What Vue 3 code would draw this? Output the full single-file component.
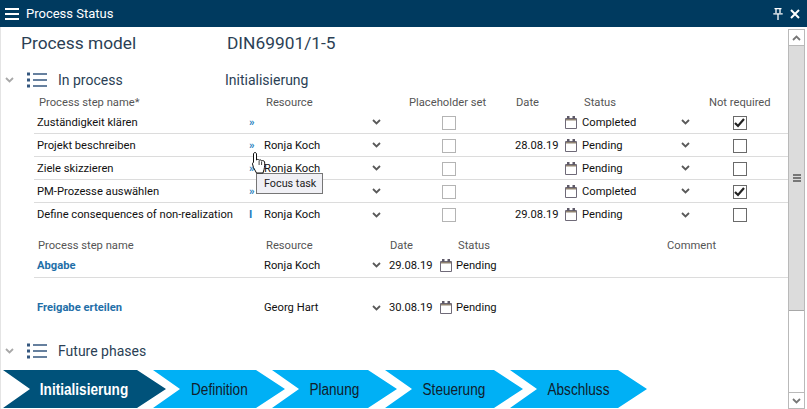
<script setup>
const steps = [
  { name: 'Zuständigkeit klären', arrow: '»', resource: '', date: '', status: 'Completed', done: true },
  { name: 'Projekt beschreiben', arrow: '»', resource: 'Ronja Koch', date: '28.08.19', status: 'Pending', done: false },
  { name: 'Ziele skizzieren', arrow: '»', resource: 'Ronja Koch', date: '', status: 'Pending', done: false },
  { name: 'PM-Prozesse auswählen', arrow: '»', resource: '', date: '', status: 'Completed', done: true },
  { name: 'Define consequences of non-realization', arrow: 'I', resource: 'Ronja Koch', date: '29.08.19', status: 'Pending', done: false }
]

const gates = [
  { name: 'Abgabe', resource: 'Ronja Koch', date: '29.08.19', status: 'Pending' },
  { name: 'Freigabe erteilen', resource: 'Georg Hart', date: '30.08.19', status: 'Pending' }
]

const phases = ['Initialisierung', 'Definition', 'Planung', 'Steuerung', 'Abschluss']
</script>

<template>
  <div class="window">
    <svg class="defs" width="0" height="0">
      <symbol id="chev" viewBox="0 0 9 6">
        <path d="M1 1l3.500 3.500L8 1" fill="none" stroke="currentColor" stroke-width="1.800" />
      </symbol>
      <symbol id="cal" viewBox="0 0 12 13">
        <path d="M.5 2.500h11v10H.5z" fill="#fff" stroke="#6f6a78" />
        <path d="M1 3h10v1.500H1z" fill="#8f8270" />
        <path d="M2 0h2.500v3H2zM7.500 0H10v3H7.500z" fill="#5f5a68" />
      </symbol>
      <symbol id="list" viewBox="0 0 20 16">
        <path d="M6 2h14M6 8h14M6 14h14" stroke="#34577f" stroke-width="1.600" />
        <path d="M0 .5h3v3H0zM0 6.500h3v3H0zM0 12.500h3v3H0z" fill="#34577f" />
      </symbol>
    </svg>

    <header class="titlebar">
      <svg class="burger" width="14" height="12" viewBox="0 0 14 12">
        <path d="M0 1h14M0 6h14M0 11h14" stroke="#fff" stroke-width="2" />
      </svg>
      <span class="title">Process Status</span>
      <svg class="pin" width="10" height="12" viewBox="0 0 10 12">
        <path d="M1.500 .7h7M3 .7v4.300M7 .7v4.300M.3 5.800h9.400M5 6v6" stroke="#fff" stroke-width="1.300" fill="none" />
      </svg>
      <svg class="close" width="10" height="10" viewBox="0 0 10 10">
        <path d="M1 1l8 8M9 1l-8 8" stroke="#fff" stroke-width="2" />
      </svg>
    </header>

    <div class="body">
      <main class="content">
        <div class="model">
          <span class="model-label">Process model</span>
          <span class="model-value">DIN69901/1-5</span>
        </div>

        <div class="section">
          <svg class="toggle"><use href="#chev" /></svg>
          <svg class="list-icon"><use href="#list" /></svg>
          <span class="section-name">In process</span>
          <span class="section-phase">Initialisierung</span>
        </div>

        <div class="steps">
          <div class="step-row head">
            <span class="h-name">Process step name*</span>
            <span></span>
            <span class="h-res">Resource</span>
            <span></span>
            <span class="h-ph">Placeholder set</span>
            <span class="h-date">Date</span>
            <span></span>
            <span class="h-status">Status</span>
            <span></span>
            <span class="h-req">Not required</span>
          </div>
          <div v-for="s in steps" :key="s.name" class="step-row line">
            <span class="name">{{ s.name }}</span>
            <span class="arrow">{{ s.arrow }}</span>
            <span>{{ s.resource }}</span>
            <svg class="chev"><use href="#chev" /></svg>
            <span class="box ph"></span>
            <span>{{ s.date }}</span>
            <svg class="cal"><use href="#cal" /></svg>
            <span>{{ s.status }}</span>
            <svg class="chev"><use href="#chev" /></svg>
            <span class="box req" :class="{ checked: s.done }">
              <svg v-if="s.done" width="11" height="10" viewBox="0 0 11 10">
                <path d="M1 5l3 3 6-7" fill="none" stroke="#222" stroke-width="2.200" />
              </svg>
            </span>
          </div>
        </div>

        <div class="gates">
          <div class="gate-row head">
            <span class="h-name">Process step name</span>
            <span class="h-res">Resource</span>
            <span></span>
            <span class="h-gdate">Date</span>
            <span></span>
            <span class="h-status">Status</span>
            <span class="h-comment">Comment</span>
          </div>
          <div v-for="g in gates" :key="g.name" class="gate-row gate">
            <span class="gate-name">{{ g.name }}</span>
            <span>{{ g.resource }}</span>
            <svg class="chev"><use href="#chev" /></svg>
            <span class="gate-date">{{ g.date }}</span>
            <svg class="cal"><use href="#cal" /></svg>
            <span>{{ g.status }}</span>
            <span></span>
          </div>
        </div>

        <div class="section future">
          <svg class="toggle"><use href="#chev" /></svg>
          <svg class="list-icon"><use href="#list" /></svg>
          <span class="section-name">Future phases</span>
        </div>

        <nav class="phases">
          <div
            v-for="(p, i) in phases"
            :key="p"
            class="phase"
            :class="['phase-' + i, { active: i === 0 }]"
          >
            <span class="phase-text">{{ p }}</span>
          </div>
        </nav>

        <!-- hover state from the screenshot -->
        <div class="tooltip">Focus task</div>
        <svg class="hand" width="14" height="22" viewBox="0 0 14 22">
          <path
            d="M1.500 1.500c.6-1.200 2.500-1.200 3 0V8c.8-.9 2.200-.7 2.600.3.800-.7 2.100-.5 2.500.5.800-.5 2.700-.2 3 1.200.2 2.500.1 5-.6 7.500l-1 3.500H4.500L1.500 15.500 .5 12c0-1.200 .6-1.700 1-1.500z"
            fill="#fff"
            stroke="#111"
            stroke-width="1"
          />
          <path d="M7.100 9v4M9.600 9.500V13" stroke="#111" stroke-width=".8" />
        </svg>
      </main>

      <aside class="scrollbar">
        <div class="sb-btn"><svg class="sb-arrow up"><use href="#chev" /></svg></div>
        <div class="sb-thumb">
          <span class="grip"></span>
        </div>
        <div class="sb-track"></div>
        <div class="sb-btn"><svg class="sb-arrow"><use href="#chev" /></svg></div>
      </aside>
    </div>
  </div>
</template>

<style scoped>
.window {
  width: 807px;
  height: 409px;
  display: flex;
  flex-direction: column;
  overflow: hidden;
  background: #fff;
  font-family: Roboto, "Liberation Sans", sans-serif;
  font-size: 11.2px;
  color: #111;
}

.defs {
  position: absolute;
}

.titlebar {
  height: 27px;
  flex: none;
  display: flex;
  align-items: center;
  padding: 0 7px 0 5px;
  background: #003a5f;
  color: #fff;
}

.burger {
  margin-right: 7px;
}

.title {
  flex: 1;
  font-size: 13px;
}

.pin {
  margin-right: 7px;
}

.body {
  flex: 1;
  display: flex;
  min-height: 0;
  padding-right: 2px;
  border-left: 1px solid #e4e4e4;
}

.content {
  position: relative;
  width: 787px;
  display: flex;
  flex-direction: column;
}

.model {
  height: 32px;
  display: flex;
  align-items: center;
  padding-left: 20px;
  color: #2b3f55;
  font-size: 17.33px;
}

.model-label {
  width: 206px;
}

.section {
  display: flex;
  align-items: center;
  height: 22px;
  margin-top: 10px;
  color: #2b3f55;
  font-size: 14px;
}

.toggle {
  width: 9px;
  height: 6px;
  margin: 0 13px 0 4px;
  color: #a8a8a8;
}

.list-icon {
  width: 20px;
  height: 16px;
  margin-right: 11px;
}

.section-name {
  width: 167px;
}

.steps {
  margin-top: 2px;
  margin-left: 33px;
}

.step-row {
  display: grid;
  grid-template-columns: 215px 15px 105px 14px 132px 49px 18px 96px 14px 95px;
  align-items: center;
}

.head {
  height: 18px;
  color: #555;
}

.h-name {
  padding-left: 5px;
}

.h-res {
  padding-left: 2px;
}

.h-ph {
  padding-left: 26px;
}

.h-date {
  padding-left: 1px;
}

.h-status {
  padding-left: 2px;
}

.h-req {
  padding-left: 17px;
}

.line {
  height: 23px;
  border-bottom: 1px solid #dcdcdc;
  box-sizing: border-box;
}

.line:last-child {
  border-bottom: 0;
}

.name {
  padding-left: 3px;
}

.arrow {
  color: #1f7fc0;
  font-weight: 700;
}

.chev {
  width: 9px;
  height: 6px;
  justify-self: center;
  color: #5a5a5a;
}

.cal {
  width: 12px;
  height: 13px;
  margin-left: 1px;
}

.box {
  width: 12px;
  height: 12px;
  margin-top: 1px;
  display: flex;
  align-items: center;
  justify-content: center;
  border: 1px solid #b4b4b4;
}

.ph {
  justify-self: center;
  margin-right: 1px;
}

.req {
  justify-self: center;
  border-color: #6a6a6a;
}

.gates {
  margin-top: 11px;
  margin-left: 33px;
}

.gates .head {
  height: 16px;
}

.gates .h-name {
  padding-left: 4px;
}

.gate-row {
  display: grid;
  grid-template-columns: 230px 105px 14px 56px 17px 211px 120px;
  align-items: center;
}

.gate {
  height: 24px;
}

.gate + .gate {
  height: 44px;
  border-top: 1px solid #dcdcdc;
  box-sizing: border-box;
  padding-top: 23px;
  padding-bottom: 9px;
}

.gate-name {
  padding-left: 3px;
  color: #1f6fa8;
  font-weight: 700;
}

.h-gdate {
  padding-left: 7px;
}

.gate-date {
  padding-left: 6px;
}

.future {
  margin-top: 19px;
}

.phases {
  display: flex;
  margin-top: 8px;
  margin-left: 2px;
}

.phase {
  height: 38px;
  display: flex;
  align-items: center;
  justify-content: center;
  background: #00b0f5;
  color: #10202c;
  font-family: "Liberation Sans", Arial, sans-serif;
  font-size: 16px;
  margin-left: -13px;
  clip-path: polygon(0 0, calc(100% - 29px) 0, 100% 50%, calc(100% - 29px) 100%, 0 100%, 27px 50%);
}

.phase-text {
  transform: translateY(1px) scaleX(0.85);
}

.phase-0 {
  width: 163px;
  margin-left: 0;
  background: #00527a;
  color: #fff;
  font-weight: 700;
}

.phase-1 {
  width: 132px;
}

.phase-2 {
  width: 125px;
  margin-left: -13px;
}

.phase-3 {
  width: 138px;
  margin-left: -12px;
}

.phase-4 {
  width: 137px;
}

.tooltip {
  position: absolute;
  left: 255px;
  top: 146px;
  padding: 2px 6px 2px 7px;
  height: 15px;
  line-height: 15px;
  font-size: 10.8px;
  border: 1px solid #767676;
  background: #f0f0f5;
  color: #222;
}

.hand {
  position: absolute;
  left: 251px;
  top: 125px;
}

.scrollbar {
  width: 17px;
  flex: none;
  display: flex;
  flex-direction: column;
  margin-top: 2px;
  box-sizing: border-box;
  border-left: 1px solid #b9b9b9;
  border-right: 1px solid #b9b9b9;
}

.sb-btn {
  height: 17px;
  flex: none;
  display: flex;
  align-items: center;
  justify-content: center;
  box-sizing: border-box;
  border-top: 1px solid #b9b9b9;
  border-bottom: 1px solid #b9b9b9;
  color: #777;
}

.sb-arrow {
  width: 9px;
  height: 6px;
}

.sb-arrow.up {
  transform: rotate(180deg);
}

.sb-thumb {
  height: 265px;
  flex: none;
  display: flex;
  align-items: center;
  justify-content: center;
  background: #dcdcdc;
  border-bottom: 1px solid #a8a8a8;
  box-sizing: border-box;
}

.grip {
  width: 8px;
  height: 2px;
  background: #777;
  box-shadow: 0 3px 0 #777, 0 6px 0 #777;
  transform: translateY(-3px);
}

.sb-track {
  flex: 1;
}
</style>
